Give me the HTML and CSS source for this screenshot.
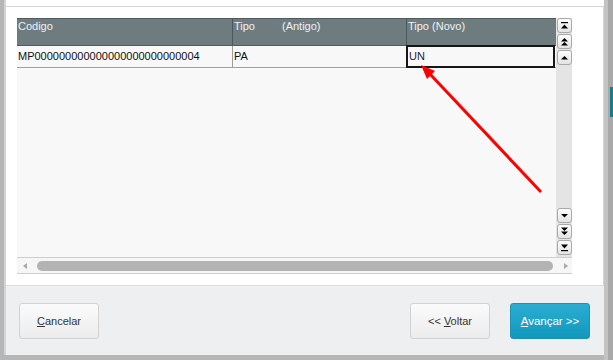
FILE: index.html
```html
<!DOCTYPE html>
<html>
<head>
	<meta charset="utf-8">
	<title>Alterar tipo</title>
	<link rel="stylesheet" href="styles.css">
</head>
<body>
	<div class="screen">
		<div class="dialog">
			<div class="dlg-top"></div>
			<div class="panel">
				<div class="grid">
					<div class="grid-body">
						<div class="table">
							<div class="thead">
								<div class="th c1">Codigo</div>
								<div class="th c2">Tipo<span class="gap">(Antigo)</span></div>
								<div class="th c3">Tipo (Novo)</div>
							</div>
							<div class="row">
								<div class="td c1">MP000000000000000000000000004</div>
								<div class="td c2">PA</div>
								<div class="td c3 sel">UN</div>
							</div>
						</div>
						<div class="vbar">
							<div class="vgroup">
								<div class="vbtn"><svg viewBox="0 0 13 13"><rect x="3" y="3" width="7" height="1.2"/><path d="M3 9.5 L6.5 5.5 L10 9.5 Z"/></svg></div>
								<div class="vbtn"><svg viewBox="0 0 13 13"><path d="M3 6.5 L6.5 3 L10 6.5 Z M3 10.5 L6.5 7 L10 10.5 Z"/></svg></div>
								<div class="vbtn"><svg viewBox="0 0 13 13"><path d="M3 8.5 L6.5 5 L10 8.5 Z"/></svg></div>
							</div>
							<div class="vgroup bottom">
								<div class="vbtn"><svg viewBox="0 0 13 13"><path d="M3 5 L6.5 8.5 L10 5 Z"/></svg></div>
								<div class="vbtn"><svg viewBox="0 0 13 13"><path d="M3 2.5 L6.5 6 L10 2.5 Z M3 6.5 L6.5 10 L10 6.5 Z"/></svg></div>
								<div class="vbtn"><svg viewBox="0 0 13 13"><path d="M3 3.5 L6.5 7.5 L10 3.5 Z"/><rect x="3" y="9" width="7" height="1.2"/></svg></div>
							</div>
						</div>
					</div>
					<div class="hscroll">
						<span class="harrow left"></span>
						<div class="thumb"></div>
						<span class="harrow right"></span>
					</div>
				</div>
			</div>
			<div class="footer">
				<button class="btn"><u>C</u>ancelar</button>
				<button class="btn back">&lt;&lt; <u>V</u>oltar</button>
				<button class="btn primary"><u>A</u>vançar &gt;&gt;</button>
			</div>
		</div>
		<div class="side">
			<div class="side-light"></div>
			<div class="side-dark"><div class="side-mark"></div></div>
		</div>
		<!-- seta vermelha por cima da grade -->
		<svg class="pointer" width="613" height="360" viewBox="0 0 613 360">
			<line x1="541" y1="192" x2="429" y2="73" stroke="#ff0000" stroke-width="3"/>
			<path d="M421 65 L435 71 L427 79 Z" fill="#ff0000"/>
		</svg>
	</div>
</body>
</html>
```

FILE: styles.css
```css
body {
	margin: 0;
	font-family: "Liberation Sans", Arial, sans-serif;
	font-size: 11px;
}

.screen {
	position: relative;
	display: flex;
	width: 613px;
	height: 360px;
	background: #b6b6b6;
	overflow: hidden;
}

.dialog {
	margin-left: 4px;
	width: 598px;
	height: 355px;
	border-left: 2px solid #d4d4d4;
	background: #fff;
	display: flex;
	flex-direction: column;
}

.dlg-top {
	height: 6px;
}

.panel {
	height: 279px;
	box-sizing: border-box;
	border-top: 1px solid #d6d6d6;
	border-right: 1px solid #d6d6d6;
	padding: 11px 0 0 11px;
}

.grid {
	width: 555px;
}

.grid-body {
	display: flex;
	height: 239px;
}

.table {
	width: 539px;
	background: #f8f8f8;
}

.thead {
	display: flex;
	height: 28px;
	box-sizing: border-box;
	border-top: 1px solid #505b5e;
	border-bottom: 1px solid #505b5e;
	background: #6f7c7f;
	color: #eef2f3;
}

.th {
	box-sizing: border-box;
	padding: 1px 0 0 1px;
	border-right: 1px solid #4c575a;
	line-height: 13px;
}

.th.c3 {
	border-right: none;
}

.gap {
	margin-left: 27px;
}

.c1 {
	width: 216px;
}

.c2 {
	width: 174px;
}

.c3 {
	width: 149px;
}

.row {
	display: flex;
	height: 22px;
	box-sizing: border-box;
	border-bottom: 1px solid #a0a0a0;
}

.td {
	box-sizing: border-box;
	padding-left: 1px;
	border-right: 1px solid #9c9c9c;
	line-height: 21px;
	color: #111;
}

.td.c3 {
	border-right: none;
	color: #1c1c3c;
}

.sel {
	position: relative;
	padding-left: 2px;
}

.sel::after {
	content: "";
	position: absolute;
	left: -1px;
	top: -1px;
	right: 1px;
	bottom: -1px;
	border: 2px solid #161616;
}

.vbar {
	width: 16px;
	background: #e4e4e4;
	display: flex;
	flex-direction: column;
	justify-content: space-between;
}

.vgroup {
	display: flex;
	flex-direction: column;
	gap: 1px;
	padding-left: 1px;
}

.vgroup.bottom {
	padding-bottom: 2px;
}

.vbtn {
	width: 15px;
	height: 15px;
	box-sizing: border-box;
	border: 1px solid #a9a9a9;
	border-radius: 3px;
	background: linear-gradient(#fdfdfd, #e3e3e3);
}

.vbtn svg {
	display: block;
	width: 13px;
	height: 13px;
	fill: #000;
}

.hscroll {
	height: 17px;
	box-sizing: border-box;
	border-top: 1px solid #cfcfcf;
	border-bottom: 1px solid #cfcfcf;
	background: #f6f6f6;
	display: flex;
	align-items: center;
	padding: 0 4px 0 6px;
}

.harrow {
	width: 0;
	height: 0;
	border-top: 3px solid transparent;
	border-bottom: 3px solid transparent;
}

.harrow.left {
	border-right: 4px solid #a8a8a8;
}

.harrow.right {
	border-left: 4px solid #a8a8a8;
}

.thumb {
	height: 10px;
	width: 516px;
	margin: 0 11px 0 10px;
	border-radius: 5px;
	background: #b3b3b3;
}

.footer {
	flex: 1;
	display: flex;
	align-items: flex-start;
	box-sizing: border-box;
	border-top: 1px solid #dadada;
	background: #eeeff1;
	padding: 17px 14px 0 13px;
}

.btn {
	width: 80px;
	height: 36px;
	box-sizing: border-box;
	border: 1px solid #d2d2d2;
	border-radius: 3px;
	background: linear-gradient(#fbfbfb, #ececec);
	font-family: "Liberation Sans", Arial, sans-serif;
	font-size: 11px;
	color: #333;
	padding: 0;
}

.btn.back {
	margin-left: auto;
	margin-right: 20px;
}

.btn.primary {
	border-color: #1b93b6;
	background: linear-gradient(#2badd1, #1298bd);
	color: #fff;
	font-size: 11.5px;
}

.side {
	display: flex;
	width: 9px;
}

.side-light {
	width: 4px;
	background: #c3c3c3;
}

.side-dark {
	flex: 1;
	background: #a9a9a9;
	padding-top: 87px;
}

.side-mark {
	margin-left: 2px;
	height: 30px;
	background: #177d8d;
}

.pointer {
	position: absolute;
	left: 0;
	top: 0;
	pointer-events: none;
}
```
